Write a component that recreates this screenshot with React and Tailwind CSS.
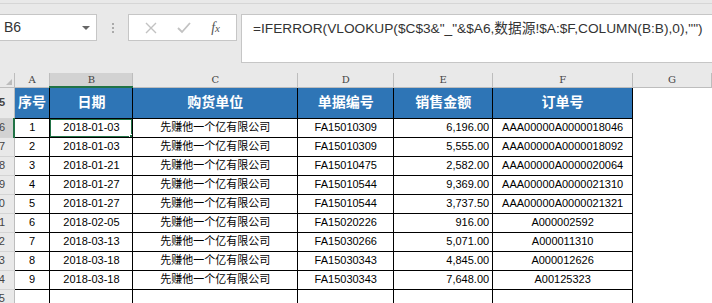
import React from 'react';

const rows = [
    ['1', '2018-01-03', 'FA15010309', '6,196.00', 'AAA00000A0000018046'],
    ['2', '2018-01-03', 'FA15010309', '5,555.00', 'AAA00000A0000018092'],
    ['3', '2018-01-21', 'FA15010475', '2,582.00', 'AAA00000A0000020064'],
    ['4', '2018-01-27', 'FA15010544', '9,369.00', 'AAA00000A0000021310'],
    ['5', '2018-01-27', 'FA15010544', '3,737.50', 'AAA00000A0000021321'],
    ['6', '2018-02-05', 'FA15020226', '916.00', 'A000002592'],
    ['7', '2018-03-13', 'FA15030266', '5,071.00', 'A000011310'],
    ['8', '2018-03-18', 'FA15030343', '4,845.00', 'A000012626'],
    ['9', '2018-03-18', 'FA15030343', '7,648.00', 'A00125323'],
];

const company = '先赚他一个亿有限公司';

function RowNum({ n, active }) {
    return (
        <td
            className={`overflow-hidden whitespace-nowrap text-right pr-[8px] text-[11px] text-[#444] border-b border-[#d4d4d4] ${
                active ? 'bg-[#d2d2d2] border-r-2 border-r-[#217346]' : 'bg-[#e9e9e9] border-r border-r-[#bdbdbd]'
            }`}
        >
            <div className="w-[5px] flex justify-end overflow-visible">{n}</div>
        </td>
    );
}

export default function App() {
    const cell = 'border border-black whitespace-nowrap overflow-hidden';
    return (
        <div
            className="w-[712px] h-[303px] overflow-hidden bg-[#e9e9e9] text-black"
            style={{ fontFamily: '"Liberation Sans", "Noto Sans CJK SC", sans-serif' }}
        >
            {/* formula bar */}
            <div className="border-t border-[#d6d6d6] mt-[3px] h-[70px] flex items-start pt-[10px]">
                <div className="w-[97px] h-[27px] bg-white border border-[#c6c6c6] border-l-0 flex items-center justify-between pl-[4px] pr-[6px]">
                    <span className="text-[14px] text-[#333]">B6</span>
                    <span className="w-0 h-0 border-l-[4px] border-r-[4px] border-t-[4px] border-l-transparent border-r-transparent border-t-[#666]"></span>
                </div>
                <div className="w-[31px] h-[27px] flex flex-col items-center justify-center gap-[2px]">
                    <span className="w-[2px] h-[2px] bg-[#aaa]"></span>
                    <span className="w-[2px] h-[2px] bg-[#aaa]"></span>
                    <span className="w-[2px] h-[2px] bg-[#aaa]"></span>
                </div>
                <div className="w-[109px] h-[27px] bg-white border border-[#c6c6c6] flex items-center justify-around px-[6px]">
                    <svg width="12" height="12" viewBox="0 0 12 12">
                        <path d="M1 1L11 11M11 1L1 11" stroke="#c2c2c2" strokeWidth="1.4" />
                    </svg>
                    <svg width="14" height="12" viewBox="0 0 14 12">
                        <path d="M1 6L5 10L13 1" stroke="#c2c2c2" strokeWidth="1.8" fill="none" />
                    </svg>
                    <span className="text-[14px] italic text-[#555]" style={{ fontFamily: '"Liberation Serif", serif' }}>
                        f<span className="text-[11px]">x</span>
                    </span>
                </div>
                <div className="ml-[4px] flex-1 h-[49px] bg-white border border-[#c6c6c6] border-r-0 pl-[11px] pt-[4px] text-[13.7px] text-[#333] whitespace-nowrap">
                    =IFERROR(VLOOKUP($C$3&amp;"_"&amp;$A6,数据源!$A:$F,COLUMN(B:B),0),"")
                </div>
            </div>

            {/* sheet */}
            <table className="border-collapse table-fixed bg-white">
                <colgroup>
                    <col className="w-[14px]" />
                    <col className="w-[36px]" />
                    <col className="w-[83px]" />
                    <col className="w-[165px]" />
                    <col className="w-[96px]" />
                    <col className="w-[99px]" />
                    <col className="w-[140px]" />
                    <col className="w-[79px]" />
                </colgroup>
                <tbody>
                    <tr className="h-[14px] text-[10px] text-[#444]">
                        <td className="bg-[#e9e9e9] border-r border-b border-[#bdbdbd] relative">
                            <span className="absolute right-[2px] bottom-[2px] w-0 h-0 border-l-[6px] border-b-[6px] border-l-transparent border-b-[#bcbcbc]"></span>
                        </td>
                        {['A', 'B', 'C', 'D', 'E', 'F', 'G'].map((c) => (
                            <td
                                key={c}
                                className={`text-center border-r border-[#bdbdbd] leading-none ${
                                    c === 'B' ? 'bg-[#d2d2d2] border-b-2 border-b-[#217346]' : 'bg-[#e9e9e9] border-b border-b-[#bdbdbd]'
                                }`}
                                style={{ fontFamily: '"DejaVu Serif", serif' }}
                            >
                                {c}
                            </td>
                        ))}
                    </tr>
                    <tr className="h-[31px] text-[14px] font-bold text-white">
                        <RowNum n="5" />
                        {['序号', '日期', '购货单位', '单据编号', '销售金额', '订单号'].map((h) => (
                            <td key={h} className={`${cell} bg-[#2e75b6] text-center`}>
                                {h}
                            </td>
                        ))}
                        <td className="bg-white"></td>
                    </tr>
                    {rows.map((r, i) => (
                        <tr key={r[0]} className="h-[19px] text-[11px]">
                            <RowNum n={String(6 + i)} active={i === 0} />
                            <td className={`${cell} text-center`}>{r[0]}</td>
                            <td className={`${cell} text-center relative`}>
                                {r[1]}
                                {i === 0 && (
                                    <>
                                        <div className="absolute -inset-[1px] border-2 border-[#217346]"></div>
                                        <div className="absolute -right-[4px] -bottom-[4px] w-[7px] h-[7px] bg-[#217346] border border-white"></div>
                                    </>
                                )}
                            </td>
                            <td className={`${cell} text-center`}>{company}</td>
                            <td className={`${cell} text-center`}>{r[2]}</td>
                            <td className={`${cell} text-right pr-[3px]`}>{r[3]}</td>
                            <td className={`${cell} text-center`}>{r[4]}</td>
                            <td className="bg-white"></td>
                        </tr>
                    ))}
                    <tr className="h-[19px] text-[11px]">
                        <RowNum n="15" />
                        <td className={cell}></td>
                        <td className={cell}></td>
                        <td className={cell}></td>
                        <td className={cell}></td>
                        <td className={cell}></td>
                        <td className={cell}></td>
                        <td className="bg-white"></td>
                    </tr>
                </tbody>
            </table>
        </div>
    );
}
